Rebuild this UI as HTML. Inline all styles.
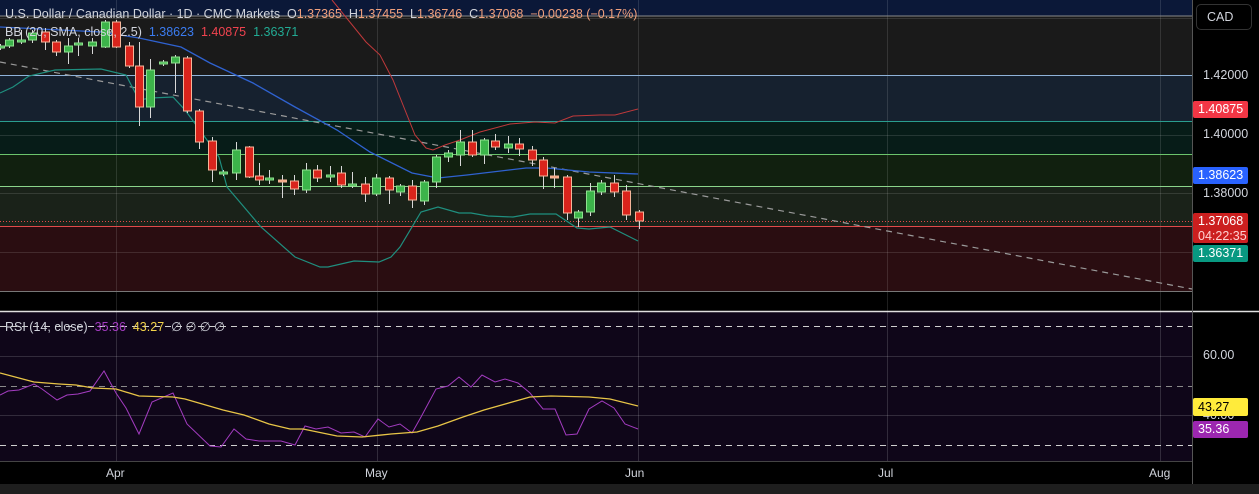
<!DOCTYPE html>
<html><head><meta charset="utf-8"><style>
html,body{margin:0;padding:0;background:#000;width:1259px;height:494px;overflow:hidden;font-family:"Liberation Sans",sans-serif}
#c{position:absolute;left:0;top:0}
.lg{position:absolute;left:5px;font-size:12.5px;color:#d1d4dc;white-space:nowrap}
.o{color:#f0a07c}
.lb{position:absolute;left:1193px;width:55px;font-size:12.5px;color:#fff;text-align:left;padding-left:5px;box-sizing:border-box;border-radius:2px}
.ax{position:absolute;left:1203px;font-size:12.5px;color:#d1d4dc}
.tm{position:absolute;top:466px;font-size:12px;color:#d1d4dc}
</style></head><body>
<svg id="c" width="1259" height="494" xmlns="http://www.w3.org/2000/svg">
<rect x="0" y="0" width="1192" height="16" fill="#0b1838"/>
<rect x="0" y="16" width="1192" height="59" fill="#1a1a1a"/>
<rect x="0" y="75" width="1192" height="46" fill="#16212f"/>
<rect x="0" y="121" width="1192" height="33" fill="#071c18"/>
<rect x="0" y="154" width="1192" height="32" fill="#11200f"/>
<rect x="0" y="186" width="1192" height="40" fill="#1a2219"/>
<rect x="0" y="226" width="1192" height="65" fill="#2a0d11"/>
<g stroke="#ffffff" stroke-opacity="0.12" stroke-width="1">
<line x1="0" y1="18.5" x2="1192" y2="18.5"/><line x1="0" y1="135.5" x2="1192" y2="135.5"/><line x1="0" y1="193.5" x2="1192" y2="193.5"/><line x1="0" y1="252.5" x2="1192" y2="252.5"/>
<line x1="116.5" y1="0" x2="116.5" y2="461"/><line x1="377.5" y1="0" x2="377.5" y2="461"/><line x1="638.5" y1="0" x2="638.5" y2="461"/><line x1="887.5" y1="0" x2="887.5" y2="461"/><line x1="1160.5" y1="0" x2="1160.5" y2="461"/>
</g>
<line x1="0" y1="16" x2="1192" y2="16" stroke="#8a8a8a"/>
<line x1="0" y1="75.5" x2="1192" y2="75.5" stroke="#8fb3d9"/>
<line x1="0" y1="121.5" x2="1192" y2="121.5" stroke="#2a9d8f"/>
<line x1="0" y1="154.5" x2="1192" y2="154.5" stroke="#6cc46c"/>
<line x1="0" y1="186.5" x2="1192" y2="186.5" stroke="#8bd48b"/>
<line x1="0" y1="226.5" x2="1192" y2="226.5" stroke="#e04a4a"/>
<line x1="0" y1="291.5" x2="1192" y2="291.5" stroke="#777"/>
<line x1="0" y1="221.5" x2="1192" y2="221.5" stroke="#e04a4a" stroke-dasharray="1 2"/>
<line x1="0" y1="62" x2="1192" y2="289" stroke="#9a9a9a" stroke-dasharray="6 5" stroke-width="1.2"/>
<polyline fill="none" stroke="#c0393b" stroke-width="1" points="332,0 366,42 380,55 393,80 405,110 415,135 426,148 433,150 445,145 460,140 480,132 510,124 535,122 555,123 573,116 600,115 615,115 638,109"/>
<polyline fill="none" stroke="#2f62d0" stroke-width="1.3" points="0,27 101,32 139,38 181,47 210,63 253,83 295,107 337,130 370,152 412,173 438,178 467,175 526,168 547,168 589,172 638,174"/>
<polyline fill="none" stroke="#1f8f7f" stroke-width="1.2" points="0,93 13,87 29,76 55,70 101,69 126,75 139,100 151,98 173,97 185,110 202,133 219,157 227,187 261,227 295,257 320,267 328,267 354,261 379,262 391,257 400,247 421,212 438,207 459,213 471,213 488,216 513,217 530,214 556,214 577,228 589,229 610,227 638,241"/>
<g id="candles"></g>
<rect x="0" y="312" width="1192" height="149" fill="#0f0619"/>
<line x1="0" y1="311.5" x2="1259" y2="311.5" stroke="#e0e0e0" stroke-width="1.5"/>
<g stroke="#ffffff" stroke-opacity="0.15"><line x1="0" y1="356.5" x2="1192" y2="356.5"/><line x1="0" y1="415.5" x2="1192" y2="415.5"/>
<line x1="116.5" y1="312" x2="116.5" y2="461"/><line x1="377.5" y1="312" x2="377.5" y2="461"/><line x1="638.5" y1="312" x2="638.5" y2="461"/><line x1="887.5" y1="312" x2="887.5" y2="461"/><line x1="1160.5" y1="312" x2="1160.5" y2="461"/></g>
<g stroke="#cfcfcf" stroke-dasharray="6 5"><line x1="0" y1="326.5" x2="1192" y2="326.5"/><line x1="0" y1="445.5" x2="1192" y2="445.5"/></g>
<line x1="0" y1="386.5" x2="1192" y2="386.5" stroke="#8a8a8a" stroke-dasharray="6 5"/>
<polyline fill="none" stroke="#a33cc0" stroke-width="1" points="0,395 8,391 19,390 34,384 42,389 57,400 67,395 78,394 90,391 104,371 116,393 126,408 139,434 152,402 173,393 187,424 210,446 221,447 234,429 246,439 259,441 281,441 295,445 305,426 316,429 328,427 341,433 354,432 365,437 378,419 389,427 400,424 412,433 421,417 436,389 448,386 459,377 471,387 482,375 495,382 505,379 518,383 530,393 543,409 555,409 566,435 577,434 589,409 602,401 614,408 625,424 638,429"/>
<polyline fill="none" stroke="#e8c547" stroke-width="1.3" points="0,373 34,382 59,384 76,385 93,388 116,389 139,396 173,397 185,399 223,410 244,415 269,424 290,429 303,429 337,436 362,437 391,434 417,432 438,426 463,417 484,410 530,397 551,396 589,397 610,399 638,406"/>
<rect x="0" y="461" width="1192" height="23" fill="#000"/>
<line x1="0" y1="461.5" x2="1192" y2="461.5" stroke="#444"/>
<line x1="1192.5" y1="0" x2="1192.5" y2="484" stroke="#555"/>
<rect x="0" y="484" width="1259" height="10" fill="#1e1e1e"/>
</svg>
<div class="lg" style="top:7px">U.S. Dollar / Canadian Dollar · 1D · CMC Markets &nbsp;O<span class="o">1.37365</span> &nbsp;H<span class="o">1.37455</span> &nbsp;L<span class="o">1.36746</span> &nbsp;C<span class="o">1.37068</span> &nbsp;<span class="o">−0.00238 (−0.17%)</span></div>
<div class="lg" style="top:25px">BB (20, SMA, close, 2.5) &nbsp;<span style="color:#3b7cf0">1.38623</span> &nbsp;<span style="color:#f0434f">1.40875</span> &nbsp;<span style="color:#22ab94">1.36371</span></div>
<div class="lg" style="top:319px">RSI (14, close) &nbsp;<span style="color:#a33cc0">35.36</span> &nbsp;<span style="color:#f3d34a">43.27</span> &nbsp;∅ ∅ ∅ ∅</div>
<div style="position:absolute;left:1196px;top:4px;width:56px;height:26px;border:1px solid #333;border-radius:5px;box-sizing:border-box;color:#d1d4dc;font-size:12.5px;line-height:24px;padding-left:10px">CAD</div>
<div class="ax" style="top:68px">1.42000</div>
<div class="lb" style="top:101px;height:17px;line-height:17px;background:#f23645">1.40875</div>
<div class="ax" style="top:127px">1.40000</div>
<div class="lb" style="top:167px;height:17px;line-height:17px;background:#2962ff">1.38623</div>
<div class="ax" style="top:186px">1.38000</div>
<div class="lb" style="top:213px;height:30px;line-height:15px;background:#cc1f1f;padding-top:1px">1.37068<br><span style="color:#ffd0d0">04:22:35</span></div>
<div class="lb" style="top:245px;height:17px;line-height:17px;background:#089981">1.36371</div>
<div class="ax" style="top:348px">60.00</div>
<div class="ax" style="top:408px">40.00</div>
<div class="lb" style="top:398px;height:18px;line-height:18px;background:#ffeb3b;color:#000">43.27</div>
<div class="lb" style="top:421px;height:17px;line-height:17px;background:#9c27b0">35.36</div>
<div class="tm" style="left:106px">Apr</div>
<div class="tm" style="left:365px">May</div>
<div class="tm" style="left:625px">Jun</div>
<div class="tm" style="left:878px">Jul</div>
<div class="tm" style="left:1149px">Aug</div>
<script>
var d=[[0,'g',46,48,44,50],[9,'g',40,46,38,48],[21,'g',40,42,30,44],[32,'g',33,40,30,43],[45,'r',32,42,28,50],[56,'r',42,52,40,56],[68,'g',46,52,38,64],[78,'g',43,45,38,56],[92,'g',42,46,38,54],[105,'g',22,47,20,48],[116,'r',22,47,20,48],[129,'r',46,66,42,68],[139,'r',66,107,42,126],[150,'g',70,107,59,118],[163,'g',62,64,60,66],[175,'g',57,63,55,93],[187,'r',58,111,56,113],[199,'r',111,142,109,149],[212,'r',141,170,137,182],[223,'g',172,174,170,176],[236,'g',150,173,142,180],[249,'r',147,177,146,178],[259,'r',176,180,163,185],[269,'g',178,180,170,184],[282,'o',180,182,175,198],[294,'r',181,189,175,195],[306,'g',170,190,163,193],[317,'r',170,178,165,182],[330,'g',175,177,166,182],[341,'r',173,185,166,188],[352,'g',184,185,172,188],[365,'r',184,194,177,202],[376,'g',178,194,174,196],[389,'r',178,190,176,204],[400,'g',186,192,184,196],[412,'r',186,200,180,208],[424,'g',182,201,180,205],[436,'g',157,182,155,188],[448,'g',153,157,150,162],[460,'g',142,155,130,166],[472,'r',142,155,130,157],[484,'g',140,155,138,164],[495,'r',141,147,134,150],[508,'g',144,148,136,153],[519,'r',144,149,138,156],[532,'r',150,160,146,166],[543,'r',160,176,157,189],[554,'o',176,177,168,188],[567,'r',177,213,175,220],[578,'g',212,218,210,227],[590,'g',191,212,183,216],[601,'g',183,192,180,195],[614,'r',183,192,175,197],[626,'r',191,215,185,220],[639,'r',212,221,210,229]];
var s='';d.forEach(function(c){var x=c[0],t=c[1];var f=t=='g'?'#3cb44a':(t=='r'?'#d9241c':'#f2a37c');var st=t=='g'?'#8fe08f':'#f5b59a';
s+='<line x1="'+(x+.5)+'" y1="'+c[4]+'" x2="'+(x+.5)+'" y2="'+c[5]+'" stroke="#d8d8d8" stroke-width="1"/>';
var h=Math.max(2,c[3]-c[2]);s+='<rect x="'+(x-3.5)+'" y="'+c[2]+'" width="8" height="'+h+'" fill="'+f+'" stroke="'+st+'" stroke-width="1"/>';});
document.getElementById('candles').innerHTML=s;
</script>
</body></html>
